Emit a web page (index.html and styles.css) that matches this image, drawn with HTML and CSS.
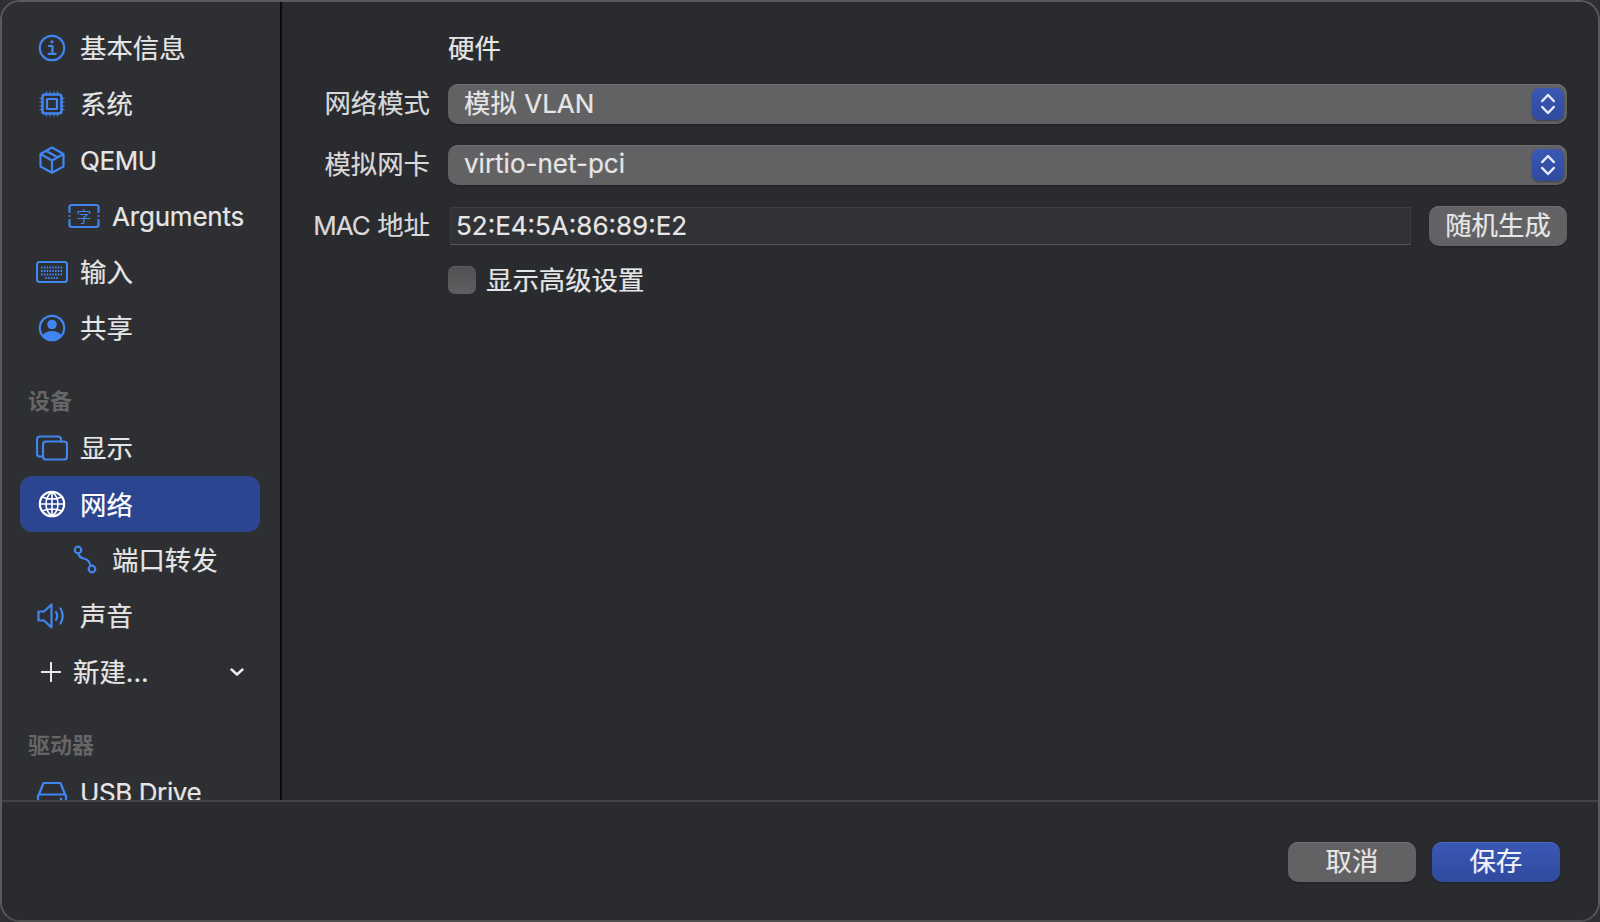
FILE: index.html
```html
<!DOCTYPE html>
<html lang="zh-CN">
<head>
<meta charset="utf-8">
<title>网络</title>
<link rel="stylesheet" href="styles.css">
</head>
<body>
<div class="window">
  <div class="main">
    <nav class="sidebar">
      <div class="row"><span class="icon"><svg viewBox="0 0 32 32"><circle cx="16" cy="16" r="12.200"/><circle class="fill" cx="16" cy="9.800" r="1.600"/><path d="M13 14h3.400v7.500M12.600 21.800h7"/></svg></span><span class="t">基本信息</span></div>
      <div class="row"><span class="icon"><svg viewBox="0 0 32 32"><rect class="bold" x="6.500" y="6.500" width="19" height="19" rx="2.500"/><rect x="11" y="11" width="10" height="10" rx=".5"/><path class="hair" d="M10.500 3.500v2M14 3.500v2M18 3.500v2M21.500 3.500v2M10.500 26.500v2M14 26.500v2M18 26.500v2M21.500 26.500v2M3.500 10.500h2M3.500 14h2M3.500 18h2M3.500 21.500h2M26.500 10.500h2M26.500 14h2M26.500 18h2M26.500 21.500h2"/></svg></span><span class="t">系统</span></div>
      <div class="row"><span class="icon"><svg viewBox="0 0 32 32"><path d="M16 3.500 27.500 10v12.500L16 28.800 4.500 22.500V10zM4.500 10 16 16.500 27.500 10M16 16.500v12.300M10 6.800l11.500 6.500"/></svg></span><span class="t latin">QEMU</span></div>
      <div class="row nested"><span class="icon"><svg viewBox="0 0 32 32"><path d="M1.500 12V7.200q0-2.200 2.200-2.200h24.600q2.200 0 2.200 2.200V12M1.500 20v4.800q0 2.200 2.200 2.200h24.600q2.200 0 2.200-2.200V20"/><circle class="fill" cx="1.500" cy="16" r="1.100"/><circle class="fill" cx="30.500" cy="16" r="1.100"/><text class="glyph" x="16" y="21.500">字</text></svg></span><span class="t latin args">Arguments</span></div>
      <div class="row"><span class="icon"><svg viewBox="0 0 32 32"><rect x="1" y="6" width="30" height="20" rx="2.500"/><path class="dots" d="M5 11.500h22M5 15h22M5 18.500h22M9 22h14"/></svg></span><span class="t">输入</span></div>
      <div class="row"><span class="icon"><svg viewBox="0 0 32 32"><circle cx="16" cy="16" r="12.200"/><circle class="fill" cx="16" cy="12.500" r="4.800"/><path class="fill" d="M6.500 23.500q3-4.500 9.500-4.500t9.500 4.500q-3.500 4.700-9.500 4.700t-9.500-4.700z"/></svg></span><span class="t">共享</span></div>
      <h2 class="section">设备</h2>
      <div class="row"><span class="icon"><svg viewBox="0 0 32 32"><path d="M7 24.500H4q-3 0-3-3V7.500q0-3 3-3h18q3 0 3 3v2"/><rect x="7" y="9.500" width="24" height="18" rx="3"/></svg></span><span class="t">显示</span></div>
      <div class="row active"><span class="icon"><svg viewBox="0 0 32 32"><circle cx="16" cy="16" r="12.200"/><path class="thin" d="M16 3.800c-8 6-8 18.400 0 24.400M16 3.800c8 6 8 18.400 0 24.400M16 3.800v24.400M6 9q10 4 20 0M3.800 16h24.400M6 23q10-4 20 0"/></svg></span><span class="t">网络</span></div>
      <div class="row nested"><span class="icon"><svg viewBox="0 0 32 32"><circle cx="10" cy="6" r="3.300"/><circle cx="24" cy="25" r="3.300"/><path d="M10.500 9.500q.5 4 5.500 5t6.500 7"/></svg></span><span class="t">端口转发</span></div>
      <div class="row"><span class="icon"><svg viewBox="0 0 32 32"><path d="M2.500 11.500h5.500L15.500 4.500v23L8 20.500H2.500zM20 12q2.500 4 0 8M24.500 8.500q4.500 7.500 0 15"/></svg></span><span class="t">声音</span></div>
      <div class="row add"><span class="plus"><svg viewBox="0 0 22 22"><path d="M11 1v20M1 11h20"/></svg></span><span class="t add-label">新建...</span><span class="chevron"><svg viewBox="0 0 14 8"><path d="M1.500 1.500 7 6.500l5.500-5"/></svg></span></div>
      <h2 class="section">驱动器</h2>
      <div class="row"><span class="icon"><svg viewBox="0 0 32 32"><path d="M2.500 19.500 7.500 7h17l5 12.500M2 19.500q0-1 2-1h24q2 0 2 1V26q0 2-2 2H4q-2 0-2-2z"/><circle class="fill" cx="25" cy="23" r="1.300"/></svg></span><span class="t latin">USB Drive</span></div>
    </nav>
    <section class="content">
      <div class="form-row heading-row"><span></span><span class="heading">硬件</span></div>
      <div class="form-row"><label class="label">网络模式</label><div class="select"><span>模拟 <span class="value-latin">VLAN</span></span><span class="stepper"><svg viewBox="0 0 16 24"><path d="M2.200 9 8 3 13.800 9M2.200 15 8 21 13.800 15"/></svg></span></div></div>
      <div class="form-row"><label class="label">模拟网卡</label><div class="select"><span class="value-latin">virtio-net-pci</span><span class="stepper"><svg viewBox="0 0 16 24"><path d="M2.200 9 8 3 13.800 9M2.200 15 8 21 13.800 15"/></svg></span></div></div>
      <div class="form-row"><label class="label"><span class="mac-word">MAC</span> 地址</label><div class="mac-line"><div class="input value-latin">52:E4:5A:86:89:E2</div><button class="btn btn-random">随机生成</button></div></div>
      <div class="form-row check-row"><span></span><div class="check-line"><span class="checkbox"></span><span>显示高级设置</span></div></div>
    </section>
  </div>
  <footer class="footer">
    <button class="btn btn-foot">取消</button>
    <button class="btn btn-foot btn-primary">保存</button>
  </footer>
</div>
</body>
</html>
```
FILE: styles.css
```css
* { box-sizing: border-box; }
html, body { margin: 0; padding: 0; height: 100%; background: #2f3033; }
body {
  font-family: Inter, "Noto Sans CJK SC", sans-serif;
  font-size: 26.4px;
  line-height: 1;
  color: #e6e6e6;
  -webkit-text-stroke: 0.2px;
  overflow: hidden;
}
.window {
  width: 1600px;
  height: 922px;
  display: flex;
  flex-direction: column;
  background: #2a2b2f;
  border: 2px solid #5a5b5d;
  border-bottom-color: #4e4f51;
  border-radius: 20px;
  overflow: hidden;
}
.main { height: 798px; display: flex; flex: none; }
.sidebar {
  width: 280px;
  flex: none;
  height: 798px;
  overflow: hidden;
  background: #2d2f32;
  border-right: 2px solid #0b0b0c;
  padding: 18px 20px 0 18px;
}
.row {
  display: flex;
  align-items: center;
  height: 56px;
  padding-left: 16px;
  gap: 12px;
  white-space: nowrap;
}
.row.nested { padding-left: 48px; }
.row.active { background: #2c4590; border-radius: 12px; color: #fff; }
.row.active .t { padding-top: 2px; }
.t { padding-top: 1px; }
.latin { font-size: 26px; letter-spacing: -0.4px; padding-top: 2px; }
.args { letter-spacing: -0.2px; }
.value-latin { font-size: 26px; }
.mac-word { font-size: 26px; letter-spacing: -1px; }
.icon { width: 32px; height: 32px; flex: none; display: block; }
.icon svg { display: block; width: 32px; height: 32px; fill: none; stroke: #4186f0; stroke-width: 2.200; stroke-linejoin: round; stroke-linecap: round; }
.icon .fill { fill: #4186f0; stroke: none; }
.icon .thin { stroke-width: 1.600; }
.icon .bold { stroke-width: 2.600; }
.icon .hair { stroke-width: 1.200; stroke-linecap: butt; }
.icon .dots { stroke-width: 1.800; stroke-dasharray: 1.600 1.200; stroke-linecap: butt; }
.icon .glyph { fill: #4186f0; stroke: none; font-size: 15px; text-anchor: middle; font-family: "Noto Sans CJK SC", sans-serif; -webkit-text-stroke: 0; }
.active .icon svg { stroke: #fff; }
.section {
  margin: 0;
  height: 64px;
  padding: 31px 0 0 8px;
  font-size: 22px;
  line-height: 28px;
  font-weight: 700;
  color: #656667;
  -webkit-text-stroke: 0;
}
.row.add { padding-left: 20px; gap: 11px; }
.plus { width: 22px; height: 22px; flex: none; }
.plus svg { display: block; width: 22px; height: 22px; fill: none; stroke: #e6e6e6; stroke-width: 2; }
.add-label { flex: 1; }
.chevron { width: 14px; height: 8px; margin-right: 16px; flex: none; }
.chevron svg { display: block; width: 14px; height: 8px; fill: none; stroke: #eee; stroke-width: 2.400; stroke-linecap: round; stroke-linejoin: round; }
.content {
  flex: 1;
  min-width: 0;
  padding: 29px 31px 0 0;
  background: #2a2b2f;
  display: flex;
  flex-direction: column;
  gap: 21px;
}
.form-row {
  display: grid;
  grid-template-columns: 148px 1fr;
  column-gap: 18px;
  align-items: center;
  height: 40px;
}
.heading-row { height: 36px; margin-bottom: -4px; }
.heading { padding-bottom: 1px; }
.check-row { height: 28px; margin-top: -1px; }
.label { text-align: right; white-space: nowrap; color: #d9d9d9; padding-bottom: 2px; }
.select {
  height: 40px;
  display: flex;
  align-items: center;
  justify-content: space-between;
  padding: 0 3px 0 16px;
  background: #626264;
  border-radius: 10px;
  box-shadow: inset 0 1px 0 #6f6f71, 0 1px 2px rgba(0,0,0,.25);
}
.select > span:first-child { padding-bottom: 2px; }
.stepper {
  width: 32px;
  height: 32px;
  border-radius: 7px;
  background: linear-gradient(#3a58b4, #2f4a9e);
  box-shadow: 0 1px 2px rgba(0,0,0,.35);
  display: flex;
  align-items: center;
  justify-content: center;
}
.stepper svg { width: 16px; height: 24px; fill: none; stroke: #e8ebf5; stroke-width: 2.500; stroke-linecap: round; stroke-linejoin: round; }
.mac-line { display: flex; align-items: center; gap: 18px; padding-left: 2px; }
.input {
  flex: 1;
  height: 38px;
  padding: 0 5px;
  display: flex;
  align-items: center;
  background: #313235;
  border: 1px solid #3c3d40;
  border-bottom-color: #55565a;
}
.btn {
  font: inherit;
  color: #e6e6e6;
  border: 0;
  padding: 0 0 2px;
  height: 40px;
  background: #626264;
  border-radius: 10px;
  box-shadow: inset 0 1px 0 #6f6f71, 0 1px 2px rgba(0,0,0,.25);
  flex: none;
}
.btn-random { width: 138px; }
.check-line { display: flex; align-items: center; gap: 10px; }
.checkbox {
  width: 28px;
  height: 28px;
  border-radius: 7px;
  background: linear-gradient(#515154, #606063);
  box-shadow: inset 0 1px 0 #5c5c5f;
}
.footer {
  flex: 1;
  display: flex;
  justify-content: flex-end;
  gap: 16px;
  padding: 40px 38px 0 0;
  background: #2a2b2f;
  border-top: 2px solid #434448;
}
.btn-foot { width: 128px; }
.btn-primary { background: linear-gradient(#3a58b4, #2f4a9e); color: #f0f2fa; box-shadow: inset 0 1px 0 #4a68c4, 0 1px 2px rgba(0,0,0,.25); }
```
